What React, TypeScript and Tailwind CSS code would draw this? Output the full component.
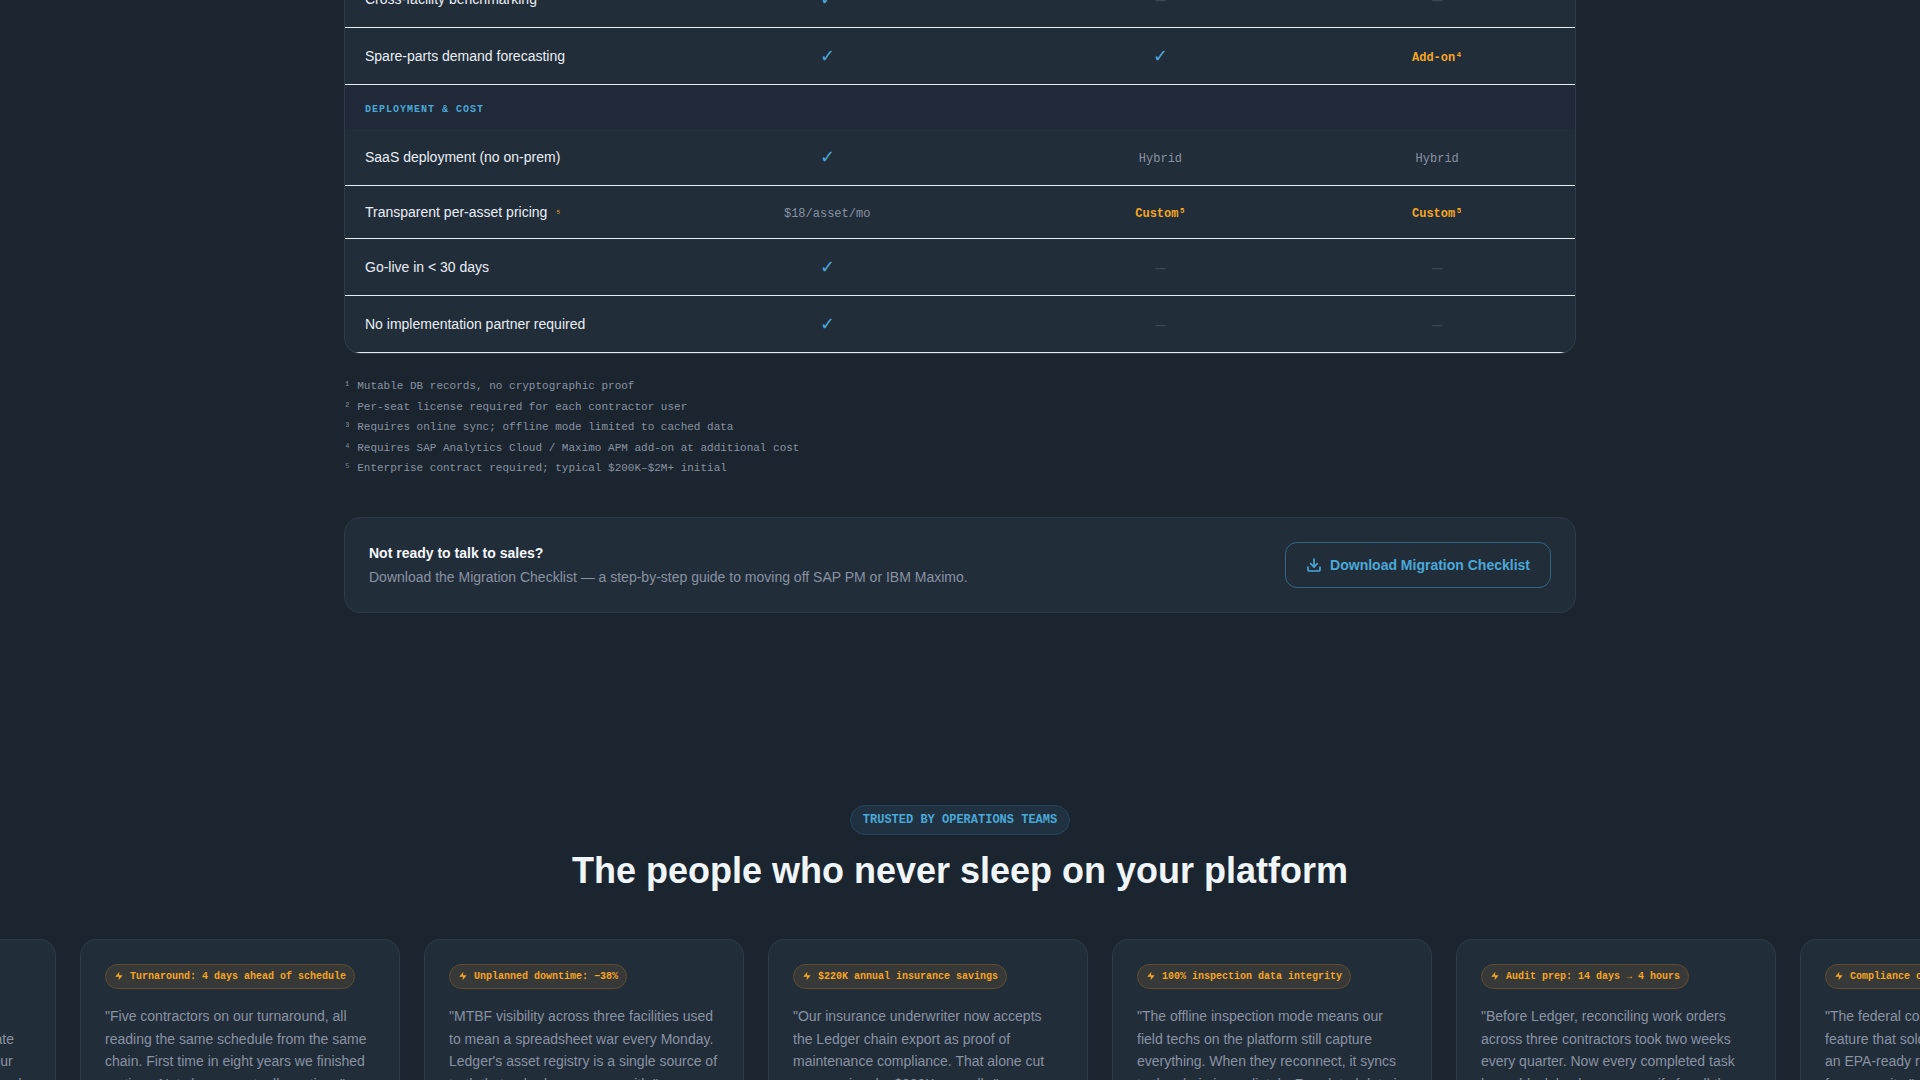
import { Download } from "lucide-react";

type Cell = { kind: "check" | "dash" | "text" | "note"; label?: string };

type Row = { feature: string; ref?: string; cells: Cell[] };

const check: Cell = { kind: "check" };
const dash: Cell = { kind: "dash" };
const text = (label: string): Cell => ({ kind: "text", label });
const note = (label: string): Cell => ({ kind: "note", label });

const analyticsRows: Row[] = [
  { feature: "Cross-facility benchmarking", cells: [check, dash, dash] },
  { feature: "Spare-parts demand forecasting", cells: [check, check, note("Add-on⁴")] },
];

const deploymentRows: Row[] = [
  { feature: "SaaS deployment (no on-prem)", cells: [check, text("Hybrid"), text("Hybrid")] },
  {
    feature: "Transparent per-asset pricing",
    ref: "⁵",
    cells: [text("$18/asset/mo"), note("Custom⁵"), note("Custom⁵")],
  },
  { feature: "Go-live in < 30 days", cells: [check, dash, dash] },
  { feature: "No implementation partner required", cells: [check, dash, dash] },
];

const footnotes = [
  "¹ Mutable DB records, no cryptographic proof",
  "² Per-seat license required for each contractor user",
  "³ Requires online sync; offline mode limited to cached data",
  "⁴ Requires SAP Analytics Cloud / Maximo APM add-on at additional cost",
  "⁵ Enterprise contract required; typical $200K–$2M+ initial",
];

const testimonials = [
  {
    metric: "Onboarding: 2 hours",
    quote:
      "Ledger gives us the one record our inspectors all trust. You may even isolate each contractor's work package, and our auditors sign off on the exact same record every time.",
  },
  {
    metric: "Turnaround: 4 days ahead of schedule",
    quote:
      "Five contractors on our turnaround, all reading the same schedule from the same chain. First time in eight years we finished on time. Not close — actually on time.",
  },
  {
    metric: "Unplanned downtime: −38%",
    quote:
      "MTBF visibility across three facilities used to mean a spreadsheet war every Monday. Ledger's asset registry is a single source of truth that nobody can argue with.",
  },
  {
    metric: "$220K annual insurance savings",
    quote:
      "Our insurance underwriter now accepts the Ledger chain export as proof of maintenance compliance. That alone cut our premium by $220K annually.",
  },
  {
    metric: "100% inspection data integrity",
    quote:
      "The offline inspection mode means our field techs on the platform still capture everything. When they reconnect, it syncs to the chain immediately. Regulated data is never lost.",
  },
  {
    metric: "Audit prep: 14 days → 4 hours",
    quote:
      "Before Ledger, reconciling work orders across three contractors took two weeks every quarter. Now every completed task has a block hash we can verify for all the auditors.",
  },
  {
    metric: "Compliance cost: −60%",
    quote:
      "The federal compliance export is the feature that sold our board. We generate an EPA-ready report in minutes, not weeks, for every site.",
  },
];

function CellValue({ cell }: { cell: Cell }) {
  switch (cell.kind) {
    case "check":
      return <span className="text-lg/6 text-[#4aa8d8]">✓</span>;
    case "dash":
      return <span className="text-lg/6 text-[#3d4855]">–</span>;
    case "note":
      return <span className="font-['Liberation_Mono',monospace] text-xs font-bold text-[#f5a623]">{cell.label}</span>;
    default:
      return <span className="font-['Liberation_Mono',monospace] text-xs text-[#8893a1]">{cell.label}</span>;
  }
}

function FeatureRow({ row }: { row: Row }) {
  return (
    <tr className="border-b border-[#e8eef5]">
      <th scope="row" className="px-5 py-4 text-left font-normal text-[#e8eef5]">
        {row.feature}
        {row.ref && (
          <span className="ml-2 font-['Liberation_Mono',monospace] text-[10px] text-[#f5a623]">{row.ref}</span>
        )}
      </th>
      {row.cells.map((cell, i) => (
        <td key={i} className="px-5 py-4 text-center">
          <CellValue cell={cell} />
        </td>
      ))}
    </tr>
  );
}

function ComparisonTable() {
  return (
    <div className="overflow-hidden rounded-2xl border border-[#2f3b48] bg-[#222d3a]">
      <table className="w-full table-fixed border-collapse text-sm">
        <colgroup>
          <col className="w-[23.4%]" />
          <col className="w-[31.6%]" />
          <col className="w-[22.6%]" />
          <col className="w-[22.4%]" />
        </colgroup>
        <tbody>
          {analyticsRows.map((row) => (
            <FeatureRow key={row.feature} row={row} />
          ))}
          <tr className="bg-[#202937]">
            <th
              colSpan={4}
              scope="colgroup"
              className="px-5 pt-4 pb-2.5 text-left font-['Liberation_Mono',monospace] text-[10px]/[18px] font-bold tracking-widest text-[#4aa8d8] uppercase"
            >
              Deployment &amp; Cost
            </th>
          </tr>
          {deploymentRows.map((row) => (
            <FeatureRow key={row.feature} row={row} />
          ))}
        </tbody>
      </table>
    </div>
  );
}

function ChecklistBanner() {
  return (
    <div className="mt-10 flex flex-wrap items-center justify-between gap-4 rounded-2xl border border-[#2f3b48] bg-[#222d3a] p-6">
      <div className="text-sm">
        <p className="mb-1 font-bold text-[#f4f8fc]">Not ready to talk to sales?</p>
        <p className="text-[#8893a1]">
          Download the Migration Checklist — a step-by-step guide to moving off SAP PM or IBM Maximo.
        </p>
      </div>
      <button
        type="button"
        className="inline-flex items-center gap-2 rounded-xl border border-[#356580] px-5 py-3 text-sm font-bold text-[#4aa8d8]"
      >
        <Download className="size-4" strokeWidth={2.5} />
        Download Migration Checklist
      </button>
    </div>
  );
}

function BoltIcon() {
  return (
    <svg viewBox="0 0 24 24" fill="currentColor" className="size-2.5" aria-hidden="true">
      <path d="M13 2 3 14h9l-1 8 10-12h-9l1-8z" />
    </svg>
  );
}

function TestimonialCard({ metric, quote }: { metric: string; quote: string }) {
  return (
    <figure className="w-80 shrink-0 rounded-2xl border border-[#2f3b48] bg-[#222d3a] p-6">
      <div className="mb-4 flex">
        <span className="inline-flex items-center gap-1.5 rounded-full border border-[#634d2d] bg-[#373838] px-2 py-1 font-['Liberation_Mono',monospace] text-[10px] font-bold whitespace-nowrap text-[#f5a623]">
          <BoltIcon />
          {metric}
        </span>
      </div>
      <blockquote className="text-sm leading-relaxed text-[#8893a1]">"{quote}"</blockquote>
    </figure>
  );
}

export default function App() {
  return (
    <main className="h-screen overflow-hidden bg-[#1b2530] font-['Liberation_Sans',Arial,sans-serif] text-[#e8eef5]">
      <section className="mx-auto -mt-[30px] max-w-7xl px-6 pb-24">
        <ComparisonTable />
        <div className="mt-6 space-y-1 font-['Liberation_Mono',monospace] text-[11px] text-[#8893a1]">
          {footnotes.map((line) => (
            <p key={line}>{line}</p>
          ))}
        </div>
        <ChecklistBanner />
      </section>

      <section className="pt-24">
        <div className="mb-12 flex flex-col items-center px-6 text-center">
          <span className="mb-4 rounded-full border border-[#27475c] bg-[#203241] px-3 py-1.5 font-['Liberation_Mono',monospace] text-xs font-bold text-[#4aa8d8] uppercase">
            Trusted by operations teams
          </span>
          <h2 className="text-4xl font-bold text-[#f0f5fa]">The people who never sleep on your platform</h2>
        </div>
        {/* Marquee track, already scrolled most of a card */}
        <div className="-ml-66 flex w-max gap-6">
          {testimonials.map((item) => (
            <TestimonialCard key={item.metric} {...item} />
          ))}
        </div>
      </section>
    </main>
  );
}
